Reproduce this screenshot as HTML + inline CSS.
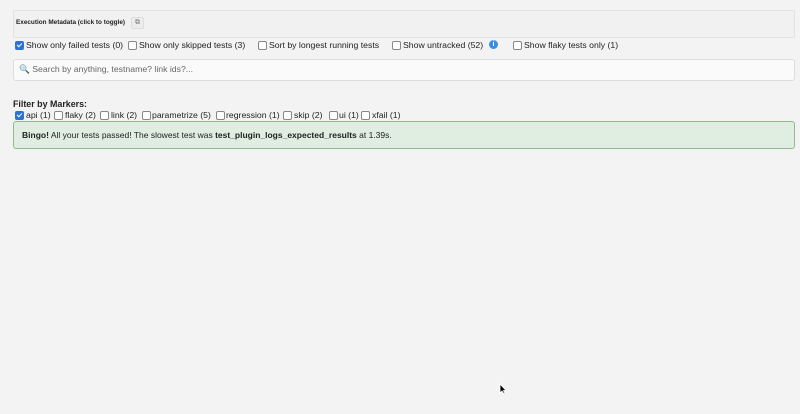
<!DOCTYPE html>
<html><head><style>
body{margin:0;width:800px;height:414px;background:#f3f3f3;font-family:"Liberation Sans",Arial,sans-serif;color:#222;position:relative;overflow:hidden}
.a{position:absolute;white-space:nowrap}
.cb{position:absolute;width:7px;height:7px;border:1px solid #888;border-radius:2px;background:#fff}
.cb.on{background:#2a73d8;border-color:#2a73d8}
.cb.on:after{content:"";position:absolute;left:2px;top:0px;width:2px;height:4px;border:solid #fff;border-width:0 1.5px 1.5px 0;transform:rotate(45deg)}
.t{font-size:8.7px;line-height:11px}
</style></head><body>
<div class="a" style="left:13px;top:10px;width:780px;height:26px;border:1px solid #e2e2e2;background:#f1f1f1;border-radius:2px"></div>
<div class="a" style="left:16px;top:18px;font-size:6.4px;font-weight:bold;line-height:9px">Execution Metadata (click to toggle)</div>
<div class="a" style="left:131px;top:17px;width:11px;height:10px;border:1px solid #ddd;background:#ececec;border-radius:2px;font-size:7px;line-height:10px;text-align:center;color:#777">⧉</div>

<div class="cb on" style="left:15px;top:41px"></div><div class="a t" style="left:26px;top:40px">Show only failed tests (0)</div>
<div class="cb" style="left:128px;top:41px"></div><div class="a t" style="left:139px;top:40px">Show only skipped tests (3)</div>
<div class="cb" style="left:258px;top:41px"></div><div class="a t" style="left:269px;top:40px">Sort by longest running tests</div>
<div class="cb" style="left:392px;top:41px"></div><div class="a t" style="left:403px;top:40px">Show untracked (52)</div>
<div class="a" style="left:489px;top:40px;width:9px;height:9px;border-radius:50%;background:#3a8ee6;color:#fff;font-size:7px;line-height:9px;text-align:center;font-weight:bold">i</div>
<div class="cb" style="left:513px;top:41px"></div><div class="a t" style="left:524px;top:40px">Show flaky tests only (1)</div>

<div class="a" style="left:13px;top:59px;width:780px;height:20px;border:1px solid #ddd;background:#fafafa;border-radius:3px"></div>
<div class="a t" style="left:19px;top:64px;color:#666">🔍 Search by anything, testname? link ids?...</div>

<div class="a" style="left:13px;top:99px;font-size:8.9px;font-weight:bold;line-height:11px">Filter by Markers:</div>
<div class="cb on" style="left:15px;top:111px"></div><div class="a t" style="left:26px;top:110px">api (1)</div>
<div class="cb" style="left:54px;top:111px"></div><div class="a t" style="left:65px;top:110px">flaky (2)</div>
<div class="cb" style="left:100px;top:111px"></div><div class="a t" style="left:111px;top:110px">link (2)</div>
<div class="cb" style="left:142px;top:111px"></div><div class="a t" style="left:152px;top:110px">parametrize (5)</div>
<div class="cb" style="left:216px;top:111px"></div><div class="a t" style="left:226px;top:110px">regression (1)</div>
<div class="cb" style="left:283px;top:111px"></div><div class="a t" style="left:294px;top:110px">skip (2)</div>
<div class="cb" style="left:329px;top:111px"></div><div class="a t" style="left:339px;top:110px">ui (1)</div>
<div class="cb" style="left:361px;top:111px"></div><div class="a t" style="left:372px;top:110px">xfail (1)</div>

<div class="a" style="left:13px;top:121px;width:780px;height:26px;border:1px solid #8fb98f;background:#dfeee0;border-radius:3px"></div>
<div class="a" style="left:22px;top:130px;font-size:8.5px;line-height:11px"><b>Bingo!</b> All your tests passed! The slowest test was <b>test_plugin_logs_expected_results</b> at 1.39s.</div>

<svg class="a" style="left:499px;top:383px" width="8" height="12" viewBox="0 0 8 12"><path d="M1 1 L1 10 L3 8 L5 11 L6 10.5 L4.5 7.5 L7 7.5 Z" fill="#000" stroke="#fff" stroke-width="0.8"/></svg>
</body></html>
